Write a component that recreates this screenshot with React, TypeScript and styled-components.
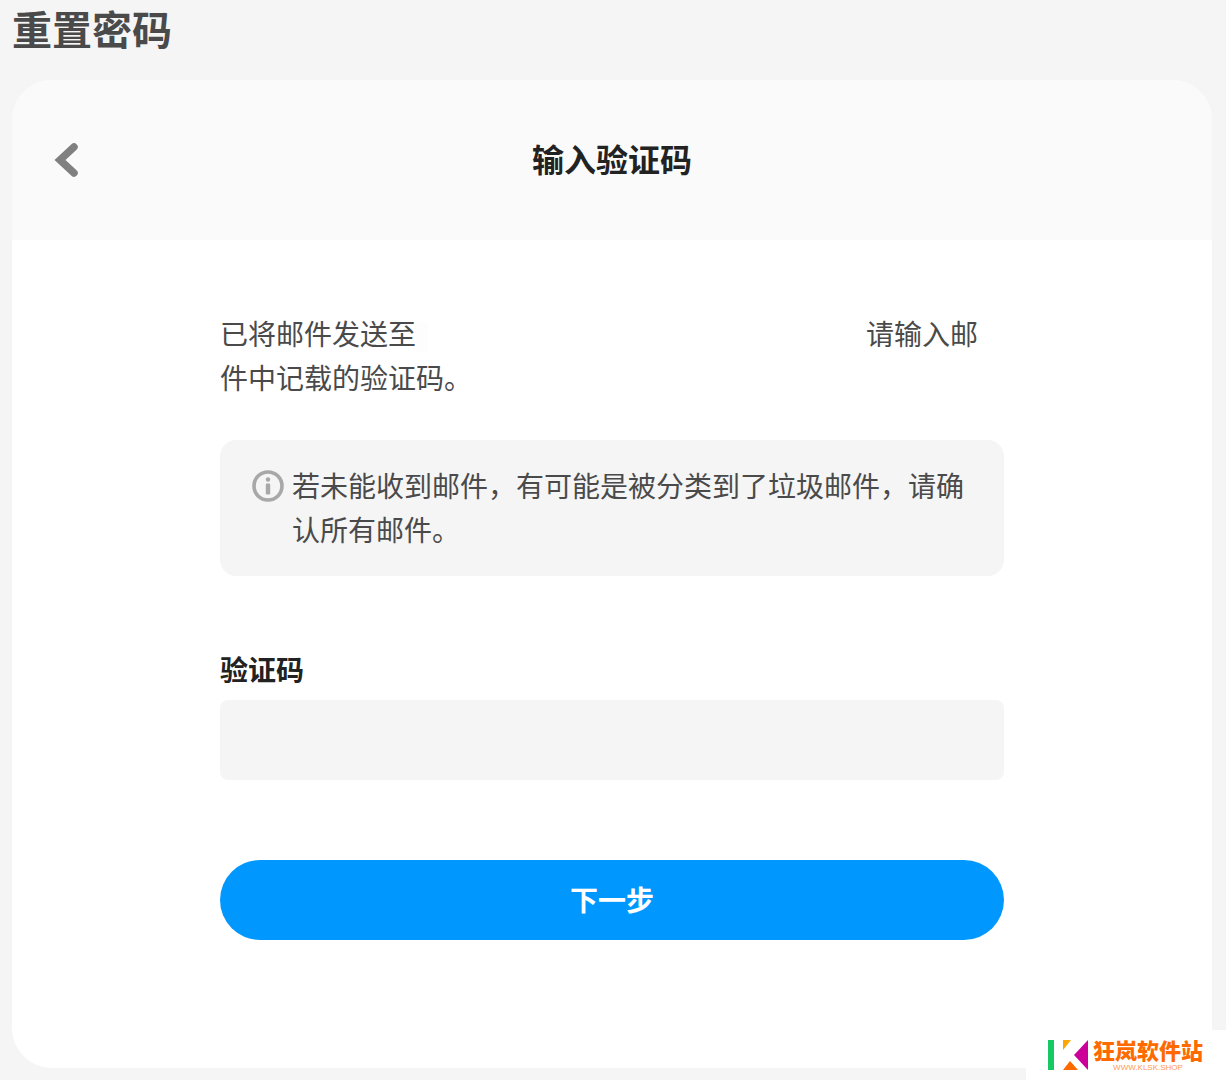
import React from "react";
import styled, { createGlobalStyle } from "styled-components";

const GlobalStyle = createGlobalStyle`
  html, body {
    margin: 0;
    padding: 0;
    background: #f5f5f5;
  }
  * {
    box-sizing: border-box;
  }
`;

const Page = styled.div`
  position: relative;
  width: 1226px;
  height: 1080px;
  padding: 0 14px 12px 12px;
  overflow: hidden;
  font-family: "Noto Sans CJK SC", "Noto Sans", sans-serif;
`;

const PageTitle = styled.h1`
  margin: 0;
  height: 80px;
  font-size: 40px;
  line-height: 56px;
  font-weight: 700;
  color: #4a4a4a;
`;

const Card = styled.div`
  height: 988px;
  border-radius: 40px;
  background: #fff;
  overflow: hidden;
`;

const CardHeader = styled.div`
  position: relative;
  height: 160px;
  padding-bottom: 4px;
  background: #fafafa;
  display: flex;
  align-items: center;
  justify-content: center;
`;

const BackButton = styled.button`
  position: absolute;
  left: 38px;
  top: 60px;
  width: 32px;
  height: 40px;
  padding: 0;
  border: 0;
  background: none;
  display: flex;
  align-items: center;
  justify-content: center;
`;

const HeaderTitle = styled.h2`
  margin: 0;
  font-size: 32px;
  line-height: 44px;
  font-weight: 700;
  color: #222;
`;

const Content = styled.div`
  width: 784px;
  margin: 0 auto;
  padding-top: 71px;
  display: flex;
  flex-direction: column;
`;

const Lead = styled.p`
  margin: 0;
  font-size: 28px;
  line-height: 44px;
  color: #4a4a4a;
`;

const Redacted = styled.span`
  display: inline-block;
  width: 450px;
  height: 30px;
  vertical-align: middle;
  background: linear-gradient(to right, #fdfdfd 0, #fdfdfd 12px, #fff 12px);
`;

const Notice = styled.div`
  margin-top: 41px;
  height: 136px;
  padding: 23px 40px 0 32px;
  border-radius: 16px;
  background: #f5f5f5;
  display: flex;
  align-items: flex-start;
  gap: 8px;
`;

const NoticeIcon = styled.svg`
  flex: none;
  width: 32px;
  height: 32px;
  margin-top: 7px;
`;

const NoticeText = styled.p`
  margin: 0;
  font-size: 28px;
  line-height: 44px;
  color: #4a4a4a;
`;

const FieldLabel = styled.label`
  margin-top: 71px;
  height: 53px;
  font-size: 28px;
  line-height: 44px;
  font-weight: 700;
  color: #222;
`;

const CodeInput = styled.input`
  height: 80px;
  border: 0;
  outline: 0;
  border-radius: 8px;
  background: #f5f5f5;
`;

const NextButton = styled.button`
  margin-top: 80px;
  height: 80px;
  padding: 0 0 2px;
  border: 0;
  border-radius: 40px;
  background: #0098ff;
  color: #fff;
  font-family: inherit;
  font-size: 28px;
  font-weight: 700;
`;

const Watermark = styled.div`
  position: absolute;
  right: 0;
  bottom: 0;
  width: 200px;
  height: 50px;
  padding: 6px 0 0 22px;
  background: #fff;
  display: flex;
  gap: 5px;
`;

const LogoMark = styled.svg`
  flex: none;
  margin-top: 4px;
`;

const BrandText = styled.div`
  display: flex;
  flex-direction: column;
  align-items: center;
`;

const BrandName = styled.div`
  font-size: 22px;
  line-height: 26px;
  font-weight: 900;
  color: #ff6a00;
  white-space: nowrap;
`;

const BrandUrl = styled.div`
  font-family: "Liberation Sans", sans-serif;
  font-size: 8px;
  line-height: 10px;
  margin-top: 1px;
  color: #ff9a55;
  white-space: nowrap;
`;

const noticeText = "若未能收到邮件\uFF0C有可能是被分类到了垃圾邮件\uFF0C请确认所有邮件。";

export default function App() {
  return (
    <Page>
      <GlobalStyle />
      <PageTitle>重置密码</PageTitle>
      <Card>
        <CardHeader>
          <BackButton aria-label="back">
            <svg width="26" height="36" viewBox="0 0 26 36">
              <path d="M21 5 L7 18 L21 31" fill="none" stroke="#808080" strokeWidth="7.5" strokeLinecap="round" strokeLinejoin="miter" />
            </svg>
          </BackButton>
          <HeaderTitle>输入验证码</HeaderTitle>
        </CardHeader>
        <Content>
          <Lead>
            已将邮件发送至<Redacted />请输入邮件中记载的验证码。
          </Lead>
          <Notice>
            <NoticeIcon viewBox="0 0 32 32">
              <circle cx="16" cy="16" r="14" fill="none" stroke="#a8a8a8" strokeWidth="3.6" />
              <circle cx="16" cy="9.5" r="2.2" fill="#a8a8a8" />
              <rect x="13.8" y="13.5" width="4.4" height="11" rx="1.2" fill="#a8a8a8" />
            </NoticeIcon>
            <NoticeText>{noticeText}</NoticeText>
          </Notice>
          <FieldLabel>验证码</FieldLabel>
          <CodeInput />
          <NextButton>下一步</NextButton>
        </Content>
      </Card>
      <Watermark>
        <LogoMark width="40" height="30" viewBox="0 0 40 30">
          <rect x="0" y="0" width="6" height="30" fill="#17c964" />
          <path d="M15 0 H23 L15 10 Z" fill="#ffa500" />
          <path d="M40 0 V30 L26 15 Z" fill="#cc0099" />
          <path d="M15 30 L22 21 L30 30 Z" fill="#ff6a00" />
        </LogoMark>
        <BrandText>
          <BrandName>狂岚软件站</BrandName>
          <BrandUrl>WWW.KLSK.SHOP</BrandUrl>
        </BrandText>
      </Watermark>
    </Page>
  );
}
